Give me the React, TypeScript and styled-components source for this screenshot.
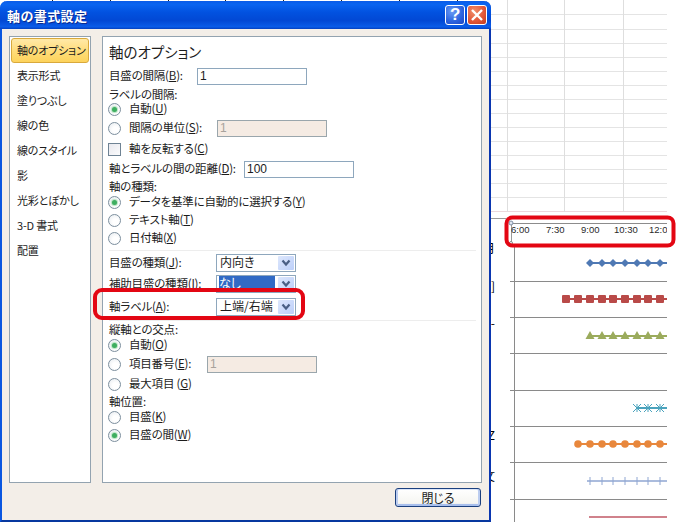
import React from "react";
import styled, { createGlobalStyle } from "styled-components";

const Global = createGlobalStyle`
  html, body { margin: 0; padding: 0; background: #fff; }
  body { font-family: "Noto Sans CJK JP", "Liberation Sans", sans-serif; }
`;

const Desktop = styled.div`
  position: relative;
  width: 676px;
  height: 523px;
  overflow: hidden;
  background: #fff;
`;

const Sheet = styled.svg`
  position: absolute;
  left: 0;
  top: 0;
`;

const Dialog = styled.div`
  position: absolute;
  left: 0;
  top: 1px;
  width: 491px;
  height: 521px;
  box-sizing: border-box;
  display: flex;
  flex-direction: column;
  background: #f3eee8;
  border-left: 2px solid #0a56e0;
  border-right: 2px solid #0a36b0;
  border-bottom: 2px solid #07389f;
  border-radius: 7px 7px 0 0;
  color: #1c1c1c;
  font-size: 11.5px;
  letter-spacing: -0.2px;
  font-feature-settings: "palt";
`;

const TitleBar = styled.div`
  height: 28px;
  margin: 0 -2px;
  flex: none;
  display: flex;
  align-items: center;
  padding: 0 4px 0 7px;
  border-radius: 7px 7px 0 0;
  background: linear-gradient(180deg, #0a5be8 0%, #0a64f0 12%, #0252e0 40%, #0248d4 70%, #0a5ce8 92%, #0440c0 100%);
`;

const TitleText = styled.div`
  flex: 1;
  color: #fff;
  font-weight: 700;
  font-size: 13px;
  letter-spacing: 0.4px;
  font-feature-settings: normal;
  text-shadow: 1px 1px 0 #0a2a90;
`;

const CaptionButton = styled.div<{ $danger?: boolean }>`
  width: 20px;
  height: 20px;
  box-sizing: border-box;
  margin-left: 2px;
  border: 1px solid #fff;
  border-radius: 3px;
  display: flex;
  align-items: center;
  justify-content: center;
  color: #fff;
  font: 700 17px "Liberation Sans", sans-serif;
  background: ${(p) =>
    p.$danger
      ? "radial-gradient(circle at 35% 30%, #f0906c 0%, #e2583a 55%, #c13a1c 100%)"
      : "radial-gradient(circle at 35% 30%, #6d9cf4 0%, #2f66e0 55%, #1c45c4 100%)"};
`;

const Body = styled.div`
  flex: 1;
  display: flex;
  gap: 11px;
  padding: 7px 7px 0;
  min-height: 0;
`;

const Panel = styled.div<{ $w?: number }>`
  box-sizing: border-box;
  background: #fff;
  border: 1px solid #93a3b0;
  ${(p) => (p.$w ? `width: ${p.$w}px; flex: none;` : "flex: 1;")}
`;

const NavList = styled.div`
  display: flex;
  flex-direction: column;
  padding-top: 1px;
`;

const NavItem = styled.div<{ $active?: boolean }>`
  height: 25px;
  box-sizing: border-box;
  margin: 0 1px;
  display: flex;
  align-items: center;
  padding: 0 0 2px 6px;
  font-size: 11px;
  white-space: nowrap;
  ${(p) =>
    p.$active
      ? `background: linear-gradient(180deg, #ffe9a8 0%, #ffdc78 55%, #fdd35c 100%);
         border: 1px solid #d9a93c; border-radius: 3px; padding-left: 5px;`
      : ""}
`;

const Form = styled.div`
  display: flex;
  flex-direction: column;
  padding: 6px 5px 0 6px;
`;

const Heading = styled.div`
  height: 20px;
  line-height: 18px;
  font-size: 14.5px;
  letter-spacing: 0;
`;

const Row = styled.div<{ $mt: number }>`
  height: 14px;
  line-height: 14px;
  margin-top: ${(p) => p.$mt}px;
  display: flex;
  align-items: center;
  white-space: nowrap;
`;

const FieldLabel = styled.span<{ $w?: number }>`
  flex: none;
  ${(p) => (p.$w ? `width: ${p.$w}px;` : "")}
`;

const Accel = styled.span`
  text-decoration: underline;
  text-underline-offset: 1px;
`;

const TextField = styled.input<{ $off?: boolean }>`
  width: 110px;
  height: 17px;
  box-sizing: border-box;
  flex: none;
  margin: 2px 0 0;
  padding: 0 2px;
  outline: none;
  border: 1px solid ${(p) => (p.$off ? "#9aa6ac" : "#8ea7bd")};
  border-radius: 0;
  background: ${(p) => (p.$off ? "#f5ebe3" : "#fff")};
  color: ${(p) => (p.$off ? "#a8a29c" : "#1c1c1c")};
  font: 12px "Liberation Sans", sans-serif;
`;

const RadioDot = styled.span<{ $on?: boolean }>`
  width: 13px;
  height: 13px;
  box-sizing: border-box;
  flex: none;
  margin: 2px 8px 0 -1px;
  border: 1px solid #7d8f9e;
  border-radius: 50%;
  display: flex;
  align-items: center;
  justify-content: center;
  background: radial-gradient(circle at 60% 60%, #ffffff 30%, #e4e9ee 100%);
  &::after {
    content: "";
    display: ${(p) => (p.$on ? "block" : "none")};
    width: 5px;
    height: 5px;
    border-radius: 50%;
    background: #3eae60;
    box-shadow: 0 0 1px 1px #b5e2c0;
  }
`;

const CheckBox = styled.span`
  width: 13px;
  height: 13px;
  box-sizing: border-box;
  flex: none;
  margin: 2px 8px 0 -1px;
  border: 1px solid #6f8394;
  background: linear-gradient(135deg, #e9e9ee 0%, #fbfbfc 100%);
`;

const Select = styled.div`
  width: 80px;
  height: 18px;
  box-sizing: border-box;
  flex: none;
  display: flex;
  align-items: center;
  margin-top: 2px;
  padding: 0 1px 0 2px;
  border: 1px solid #8ea7bd;
  background: #fff;
  font-size: 12px;
  letter-spacing: 0;
`;

const SelectValue = styled.span<{ $picked?: boolean }>`
  flex: 1;
  height: 100%;
  line-height: 14px;
  margin-right: 3px;
  padding-left: ${(p) => (p.$picked ? "0" : "1px")};
  ${(p) => (p.$picked ? "background: #316ac5; color: #fff;" : "")}
`;

const SelectArrow = styled.span`
  width: 16px;
  height: 14px;
  flex: none;
  display: flex;
  align-items: center;
  justify-content: center;
  background: linear-gradient(135deg, #dde7fc 0%, #bccffa 100%);
  border-radius: 1px;
`;

const Divider = styled.div<{ $mt: number }>`
  height: 1px;
  margin-top: ${(p) => p.$mt}px;
  background: #ededed;
`;

const Footer = styled.div`
  height: 32px;
  flex: none;
  display: flex;
  justify-content: flex-end;
  align-items: flex-start;
  padding: 5px 8px 0 0;
`;

const CloseBtn = styled.button`
  width: 86px;
  height: 19px;
  box-sizing: border-box;
  margin: 0;
  padding: 0;
  border: 1px solid #1a3f7e;
  border-radius: 3px;
  background: linear-gradient(180deg, #fff 0%, #f6f6f2 80%, #dfe4ee 100%);
  box-shadow: inset 2px 0 0 #bccdf0, inset -2px 0 0 #bccdf0, inset 0 -2px 0 #a8bfec, inset 0 1px 0 #dbe5f8;
  color: #1c1c1c;
  font: 12px "Noto Sans CJK JP", sans-serif;
  font-feature-settings: "palt";
  line-height: 16px;
`;

const RedMark = styled.div`
  position: absolute;
  left: 93px;
  top: 288px;
  width: 212px;
  height: 32px;
  box-sizing: border-box;
  border: 4px solid #e30613;
  border-radius: 9px;
`;

const Chevron = () => (
  <svg width="10" height="8" viewBox="0 0 10 8">
    <path d="M1.5 1.5 L5 5.5 L8.5 1.5" fill="none" stroke="#4a5f85" strokeWidth="2.2" />
  </svg>
);

type Mark = "diamond" | "square" | "triangle" | "star" | "circle" | "plus" | "none";
const Xs = [566, 578, 590, 602, 613, 625, 637, 648, 660];

const series: { y: number; color: string; from: number; mark: Mark }[] = [
  { y: 263, color: "#4f79b4", from: 2, mark: "diamond" },
  { y: 299, color: "#b94a48", from: 0, mark: "square" },
  { y: 336, color: "#9bab5c", from: 2, mark: "triangle" },
  { y: 408, color: "#4ba3bd", from: 6, mark: "star" },
  { y: 444, color: "#e8873c", from: 1, mark: "circle" },
  { y: 481, color: "#8fa6d2", from: 2, mark: "plus" },
];

const Marker = ({ x, y, color, mark }: { x: number; y: number; color: string; mark: Mark }) => {
  switch (mark) {
    case "diamond":
      return <polygon points={`${x},${y - 4} ${x + 4},${y} ${x},${y + 4} ${x - 4},${y}`} fill={color} />;
    case "square":
      return <rect x={x - 4} y={y - 4} width={8} height={8} rx={1} fill={color} />;
    case "triangle":
      return <polygon points={`${x},${y - 5} ${x + 4.5},${y + 3} ${x - 4.5},${y + 3}`} fill={color} />;
    case "circle":
      return <circle cx={x} cy={y} r={3.8} fill={color} />;
    case "star":
      return (
        <path
          d={`M${x - 4} ${y - 4} L${x + 4} ${y + 4} M${x - 4} ${y + 4} L${x + 4} ${y - 4} M${x} ${y - 4} V${y + 4}`}
          stroke={color}
          strokeWidth={1}
          fill="none"
        />
      );
    case "plus":
      return <path d={`M${x} ${y - 4} V${y + 4}`} stroke={color} strokeWidth={1} fill="none" />;
    default:
      return null;
  }
};

const SheetDrawing = () => {
  const gridY = [14, 29, 43, 57, 71, 85, 99, 113, 127, 141, 155, 169, 183, 197];
  const rules = [281, 317, 353, 390, 426, 462, 499];
  const ticks = [52, 110, 168, 225, 283, 341, 399, 457];
  const axis = [
    ["6:00", 511],
    ["7:30", 546],
    ["9:00", 581],
    ["10:30", 614],
    ["12:00", 649],
  ] as const;
  const stray: [string, number][] = [
    ["月", 248],
    ["]", 286],
    ["-", 323],
    ["Z", 435],
    ["文", 476],
  ];
  return (
    <Sheet width={676} height={523} viewBox="0 0 676 523">
      <defs>
        <clipPath id="plot">
          <rect x={505} y={218} width={162} height={30} />
        </clipPath>
      </defs>
      {ticks.map((x) => (
        <line key={x} x1={x + 0.5} x2={x + 0.5} y1={0} y2={2} stroke="#222" />
      ))}
      {gridY.map((y) => (
        <line key={y} x1={491} x2={667} y1={y + 0.5} y2={y + 0.5} stroke="#e4e4e4" />
      ))}
      <line x1={491} x2={667} y1={211.5} y2={211.5} stroke="#ecd8dc" />
      {[507, 564, 623].map((x) => (
        <line key={x} x1={x + 0.5} x2={x + 0.5} y1={0} y2={212} stroke="#dedede" />
      ))}
      <line x1={491} x2={506} y1={218.5} y2={218.5} stroke="#9a9a9a" />
      {stray.map(([c, y]) => (
        <text key={y} x={495} y={y + 5} textAnchor="end" fontSize={12} fill="#000" fontFamily="'Noto Sans CJK JP', sans-serif">
          {c}
        </text>
      ))}

      <line x1={511} x2={667} y1={223.5} y2={223.5} stroke="#8c8c8c" />
      <line x1={511.5} x2={511.5} y1={223} y2={243} stroke="#9a9a9a" />
      <circle cx={511} cy={223} r={2} fill="#dfe6f0" stroke="#7e8da4" />
      <circle cx={511} cy={243} r={1.5} fill="#fff" stroke="#8c8c8c" />
      <g clipPath="url(#plot)">
        {axis.map(([t, x]) => (
          <text key={t} x={x} y={233} fontSize={9.5} fill="#2a2a2a" fontFamily="'Liberation Sans', sans-serif">
            {t}
          </text>
        ))}
      </g>

      <line x1={514.5} x2={514.5} y1={246} y2={522} stroke="#8a8a8a" />
      <line x1={514} x2={667} y1={246.5} y2={246.5} stroke="#9a9a9a" />
      {rules.map((y) => (
        <line key={y} x1={510} x2={667} y1={y + 0.5} y2={y + 0.5} stroke="#8a8a8a" />
      ))}
      {series.map((s) => (
        <g key={s.y}>
          <line x1={Xs[s.from] - (s.mark === "plus" ? 3 : 0)} x2={667} y1={s.y} y2={s.y} stroke={s.color} strokeWidth={s.mark === "plus" ? 1.5 : 2} />
          {Xs.slice(s.from).map((x) => (
            <Marker key={x} x={x} y={s.y} color={s.color} mark={s.mark} />
          ))}
        </g>
      ))}
      <line x1={589} x2={667} y1={517} y2={517} stroke="#d0828c" strokeWidth={2} />

      <rect x={506.5} y={217.5} width={167} height={28} rx={6} fill="none" stroke="#e30613" strokeWidth={4} />
    </Sheet>
  );
};

const nav = ["軸のオプション", "表示形式", "塗りつぶし", "線の色", "線のスタイル", "影", "光彩とぼかし", "3-D 書式", "配置"];

const Radio = ({ on, children, mt }: { on?: boolean; children: React.ReactNode; mt: number }) => (
  <Row $mt={mt}>
    <RadioDot $on={on} />
    {children}
  </Row>
);

const Dropdown = ({ value, picked }: { value: string; picked?: boolean }) => (
  <Select>
    <SelectValue $picked={picked}>{value}</SelectValue>
    <SelectArrow>
      <Chevron />
    </SelectArrow>
  </Select>
);

export default function App() {
  return (
    <Desktop>
      <Global />
      <SheetDrawing />
      <Dialog>
        <TitleBar>
          <TitleText>軸の書式設定</TitleText>
          <CaptionButton>?</CaptionButton>
          <CaptionButton $danger>
            <svg width="14" height="14" viewBox="0 0 14 14">
              <path d="M2 2 L12 12 M12 2 L2 12" stroke="#fff" strokeWidth="2.4" fill="none" />
            </svg>
          </CaptionButton>
        </TitleBar>
        <Body>
          <Panel $w={82}>
            <NavList>
              {nav.map((n, i) => (
                <NavItem key={n} $active={i === 0}>
                  {n}
                </NavItem>
              ))}
            </NavList>
          </Panel>
          <Panel>
            <Form>
              <Heading>軸のオプション</Heading>
              <Row $mt={5}>
                <FieldLabel $w={88}>
                  目盛の間隔(<Accel>B</Accel>):
                </FieldLabel>
                <TextField readOnly value="1" />
              </Row>
              <Row $mt={5}>ラベルの間隔:</Row>
              <Radio on mt={0}>
                自動(<Accel>U</Accel>)
              </Radio>
              <Radio mt={5}>
                <FieldLabel $w={88}>
                  間隔の単位(<Accel>S</Accel>):
                </FieldLabel>
                <TextField $off readOnly value="1" />
              </Radio>
              <Row $mt={7}>
                <CheckBox />
                軸を反転する(<Accel>C</Accel>)
              </Row>
              <Row $mt={6}>
                <FieldLabel $w={135}>
                  軸とラベルの間の距離(<Accel>D</Accel>):
                </FieldLabel>
                <TextField readOnly value="100" />
              </Row>
              <Row $mt={4}>軸の種類:</Row>
              <Radio on mt={1}>
                データを基準に自動的に選択する(<Accel>Y</Accel>)
              </Radio>
              <Radio mt={4}>
                テキスト軸(<Accel>T</Accel>)
              </Radio>
              <Radio mt={4}>
                日付軸(<Accel>X</Accel>)
              </Radio>
              <Divider $mt={6} />
              <Row $mt={4}>
                <FieldLabel $w={107}>
                  目盛の種類(<Accel>J</Accel>):
                </FieldLabel>
                <Dropdown value="内向き" />
              </Row>
              <Row $mt={7}>
                <FieldLabel $w={107}>
                  補助目盛の種類(<Accel>I</Accel>):
                </FieldLabel>
                <Dropdown value="なし" picked />
              </Row>
              <Row $mt={9}>
                <FieldLabel $w={107}>
                  軸ラベル(<Accel>A</Accel>):
                </FieldLabel>
                <Dropdown value="上端/右端" />
              </Row>
              <Divider $mt={7} />
              <Row $mt={1}>縦軸との交点:</Row>
              <Radio on mt={1}>
                自動(<Accel>O</Accel>)
              </Radio>
              <Radio mt={5}>
                <FieldLabel $w={78}>
                  項目番号(<Accel>E</Accel>):
                </FieldLabel>
                <TextField $off readOnly value="1" />
              </Radio>
              <Radio mt={6}>
                最大項目 (<Accel>G</Accel>)
              </Radio>
              <Row $mt={4}>軸位置:</Row>
              <Radio mt={1}>
                目盛(<Accel>K</Accel>)
              </Radio>
              <Radio on mt={4}>
                目盛の間(<Accel>W</Accel>)
              </Radio>
            </Form>
          </Panel>
        </Body>
        <Footer>
          <CloseBtn>閉じる</CloseBtn>
        </Footer>
      </Dialog>
      <RedMark />
    </Desktop>
  );
}
